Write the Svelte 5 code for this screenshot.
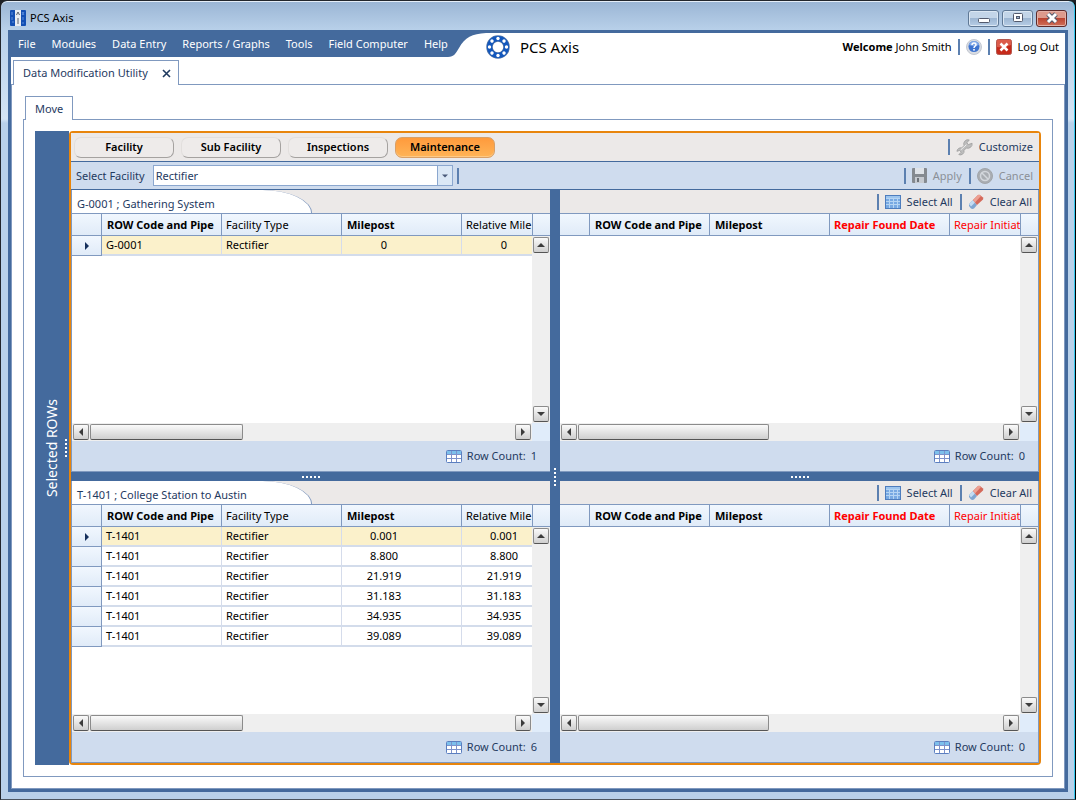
<!-- Data modification utility: move records between facilities -->
<script lang="ts">
  interface Row {
    code: string;
    type: string;
    milepost: string;
    relative: string;
  }

  interface Pane {
    id: string;
    title: string;
    rows: Row[];
  }

  const menu = ['File', 'Modules', 'Data Entry', 'Reports / Graphs', 'Tools', 'Field Computer', 'Help'];
  const sections = ['Facility', 'Sub Facility', 'Inspections', 'Maintenance'];
  const facilities = ['Rectifier', 'Test Point', 'Bond'];

  const columns = ['ROW Code and Pipe', 'Facility Type', 'Milepost', 'Relative Mile'];
  const repairColumns = ['ROW Code and Pipe', 'Milepost', 'Repair Found Date', 'Repair Initiat'];

  const toRow = (code: string, milepost: string): Row => ({
    code,
    type: 'Rectifier',
    milepost,
    relative: milepost
  });

  const panes: Pane[] = [
    { id: 'g', title: 'G-0001 ; Gathering System', rows: [toRow('G-0001', '0')] },
    {
      id: 't',
      title: 'T-1401 ; College Station to Austin',
      rows: ['0.001', '8.800', '21.919', '31.183', '34.935', '39.089'].map((m) => toRow('T-1401', m))
    }
  ];

  let section = $state('Maintenance');
  let facility = $state('Rectifier');
  let selected = $state<Record<string, number>>({ g: 0, t: 0 });
</script>

{#snippet arrow(direction: string)}
  <svg class="arrow {direction}" viewBox="0 0 8 8" aria-hidden="true"><path d="M0 6 L4 2 L8 6Z" /></svg>
{/snippet}

{#snippet dots(vertical: boolean)}
  <span class="dots" class:vertical aria-hidden="true"><i></i><i></i><i></i><i></i><i></i></span>
{/snippet}

{#snippet vertical()}
  <div class="v-side">
    <div class="cap"></div>
    <div class="v-scroll">
      <button type="button" class="scroll-button" aria-label="Scroll up">{@render arrow('up')}</button>
      <button type="button" class="scroll-button" aria-label="Scroll down">{@render arrow('down')}</button>
    </div>
  </div>
{/snippet}

{#snippet horizontal(size: number)}
  <div class="h-scroll">
    <button type="button" class="scroll-button" aria-label="Scroll left">{@render arrow('left')}</button>
    <div class="track"><div class="thumb" style="width: {size}%"></div></div>
    <button type="button" class="scroll-button" aria-label="Scroll right">{@render arrow('right')}</button>
  </div>
  <div class="corner"></div>
{/snippet}

{#snippet rowCount(count: number)}
  <footer class="count">
    <svg width="16" height="13" viewBox="0 0 16 13" aria-hidden="true">
      <rect x="0.5" y="0.5" width="15" height="12" rx="1" fill="#fff" stroke="#5b7fc0" />
      <rect x="1" y="1" width="14" height="3" fill="#7cc0ec" />
      <path d="M1 4.5h14M1 8.5h14M5.5 1v11M10.5 1v11" stroke="#7d92cb" fill="none" />
    </svg>
    <span>Row Count:</span>
    <span>{count}</span>
  </footer>
{/snippet}

{#snippet sourcePane(pane: Pane)}
  <section class="pane">
    <header class="pane-header"><h2>{pane.title}</h2></header>
    <div class="grid">
      <div class="table-clip">
        <table>
          <thead>
            <tr>
              <th class="marker"></th>
              {#each columns as column, i}
                <th class:strong={i % 2 === 0}>{column}</th>
              {/each}
            </tr>
          </thead>
          <tbody>
            {#each pane.rows as row, i}
              <tr class:current={selected[pane.id] === i} onclick={() => (selected[pane.id] = i)}>
                <td class="marker">
                  {#if selected[pane.id] === i}{@render arrow('right')}{/if}
                </td>
                <td>{row.code}</td>
                <td>{row.type}</td>
                <td class="number">{row.milepost}</td>
                <td class="number">{row.relative}</td>
              </tr>
            {/each}
          </tbody>
        </table>
      </div>
      {@render vertical()}
      {@render horizontal(36)}
    </div>
    {@render rowCount(pane.rows.length)}
  </section>
{/snippet}

{#snippet targetPane()}
  <section class="pane target">
    <header class="pane-header">
      <div class="tools">
        <button type="button" class="tool">
          <svg width="16" height="14" viewBox="0 0 16 14" aria-hidden="true">
            <rect x="0.5" y="0.5" width="15" height="13" fill="#78a9e2" stroke="#4e7dbd" />
            <path d="M1 3.5h14M1 6.5h14M1 9.5h14M4.5 1v12M8.5 1v12M12.5 1v12" stroke="#b5d4f3" fill="none" />
            <path d="M1 1h14v2H1z" fill="#9dc5ee" />
          </svg>
          Select All
        </button>
        <button type="button" class="tool">
          <svg width="16" height="16" viewBox="0 0 16 16" aria-hidden="true">
            <path d="M1 10 L5 6 L9 11 L6 14.5 Q4 15.5 2.5 14 L1 12Z" fill="#7fa6d2" />
            <path d="M1 10 L5 6 L7 8.5 L3 12.5Z" fill="#c3dcf3" />
            <path d="M5 6 L10 1 Q11 0.5 12 1 L15 3.5 Q15.5 5 15 5.5 L9 11Z" fill="#d5695a" />
            <path d="M5 6 L10 1 Q11 0.5 12 1 L13 2 L7 8.5Z" fill="#eda092" />
          </svg>
          Clear All
        </button>
      </div>
    </header>
    <div class="grid">
      <div class="table-clip">
        <table>
          <thead>
            <tr>
              <th class="marker"></th>
              {#each repairColumns as column, i}
                <th class:strong={i < 3} class:required={i > 1}>{column}</th>
              {/each}
            </tr>
          </thead>
        </table>
      </div>
      {@render vertical()}
      {@render horizontal(45)}
    </div>
    {@render rowCount(0)}
  </section>
{/snippet}

<div class="window">
  <header class="title-bar">
    <svg width="16" height="16" viewBox="0 0 16 16" aria-hidden="true">
      <rect width="16" height="16" rx="1" fill="#1450b4" />
      <rect x="5" width="6" height="16" fill="#e9edf3" />
      <path d="M2 2v3M2 7v3M2 12h2M12 2l2 3M14 2l-2 3M13 7v3M12 13h2" stroke="#5c8fe0" />
      <path d="M6.5 5 8 2l1.5 3M8 8v6" stroke="#59616e" fill="none" />
    </svg>
    <h1>PCS Axis</h1>
    <div class="window-buttons">
      <button type="button" aria-label="Minimize">
        <svg width="12" height="12" viewBox="0 0 12 12"><rect x="0.5" y="6.5" width="11" height="4" rx="1" fill="#fff" stroke="#535a6d" /></svg>
      </button>
      <button type="button" aria-label="Maximize">
        <svg width="12" height="12" viewBox="0 0 12 12">
          <rect x="1.5" y="1.5" width="9" height="8" rx="1" fill="#fff" stroke="#535a6d" />
          <rect x="4.5" y="4.5" width="3" height="2" fill="#9db4d1" stroke="#535a6d" />
        </svg>
      </button>
      <button type="button" class="close" aria-label="Close">
        <svg width="12" height="12" viewBox="0 0 12 12" fill="none">
          <path d="M2 2l8 8M10 2l-8 8" stroke="#535a6d" stroke-width="5" />
          <path d="M2 2l8 8M10 2l-8 8" stroke="#fff" stroke-width="3" />
        </svg>
      </button>
    </div>
  </header>

  <div class="client">
    <div class="menu-bar">
      <nav>
        {#each menu as item}
          <button type="button">{item}</button>
        {/each}
      </nav>
      <svg class="swoosh" width="38" height="24" viewBox="0 0 38 24" aria-hidden="true">
        <path d="M0 0H38C24 1 17 4 11 15C8 20 6 24 0 24Z" />
      </svg>
      <div class="brand">
        <svg width="24" height="24" viewBox="0 0 24 24" aria-hidden="true">
          <circle cx="12" cy="12" r="8.5" fill="none" stroke="#5274a6" stroke-width="6.5" />
          <circle cx="12" cy="12" r="8.5" fill="none" stroke="#1257bd" stroke-width="5" />
          {#each [0, 45, 90, 135, 180, 225, 270, 315] as angle}
            <circle cx="12" cy="3.5" r="1.7" fill="#fff" transform="rotate({angle} 12 12)" />
          {/each}
        </svg>
        <span>PCS Axis</span>
      </div>
      <div class="user">
        <span><b>Welcome</b> John Smith</span>
        <button type="button" class="tool" aria-label="Help">
          <svg width="16" height="16" viewBox="0 0 16 16">
            <circle cx="8" cy="8" r="7.5" fill="#d9dce2" stroke="#c3c8d2" />
            <circle cx="8" cy="7.5" r="5.5" fill="#3f74cf" />
            <path d="M3 6a5 4 0 0 1 10 0q-5 2-10 0" fill="#82a9e8" />
            <path d="M6 6q0-2 2-2t2 1.7q0 1-1.2 1.6Q8 7.8 8 9" stroke="#fff" stroke-width="1.5" fill="none" />
            <rect x="7.2" y="10" width="1.6" height="1.6" fill="#fff" />
          </svg>
        </button>
        <button type="button" class="tool">
          <svg width="16" height="16" viewBox="0 0 16 16" aria-hidden="true">
            <rect x="0.5" y="0.5" width="15" height="15" rx="2" fill="#c62a1b" stroke="#b5584e" />
            <path d="M1 2q0-1 1-1h12q1 0 1 1v4q-7 3-14 2z" fill="#dc5c4b" />
            <path d="M4.5 4.5l7 7M11.5 4.5l-7 7" stroke="#fff" stroke-width="2.5" />
          </svg>
          Log Out
        </button>
      </div>
    </div>

    <div class="tabs documents">
      <div class="tab">
        <span>Data Modification Utility</span>
        <button type="button" aria-label="Close tab">
          <svg width="9" height="9" viewBox="0 0 9 9"><path d="M1 1l7 7M8 1l-7 7" stroke="#1f3a5f" stroke-width="1.6" /></svg>
        </button>
      </div>
    </div>

    <main class="page">
      <div class="tabs inner">
        <div class="tab">Move</div>
      </div>
      <div class="tab-body">
        <button type="button" class="side-bar">
          <span>Selected ROWs</span>
          {@render dots(true)}
        </button>

        <div class="panel">
          <div class="sections">
            {#each sections as name}
              <button type="button" class="section" class:active={section === name} onclick={() => (section = name)}>
                {name}
              </button>
            {/each}
            <div class="tools">
              <button type="button" class="tool">
                <svg width="17" height="17" viewBox="0 0 18 18" aria-hidden="true">
                  <path d="M17 4.5a4.5 4.5 0 0 1-6 5L8.5 12a4 4 0 0 1-5.5 4.5L5.5 14 4 12 1 13a4 4 0 0 1 5-3.5L8.5 7A4.5 4.5 0 0 1 14 1L11.5 4 13 6z" fill="#bdbdbd" stroke="#a3a3a3" />
                  <path d="M5 11.5L11 6" stroke="#f2f2f2" />
                </svg>
                Customize
              </button>
            </div>
          </div>

          <div class="filter">
            <label for="facility">Select Facility</label>
            <div class="combo">
              <select id="facility" bind:value={facility}>
                {#each facilities as name}
                  <option>{name}</option>
                {/each}
              </select>
              <span class="combo-button">{@render arrow('down')}</span>
            </div>
            <i class="rule"></i>
            <div class="tools">
              <button type="button" class="tool" disabled>
                <svg width="15" height="15" viewBox="0 0 15 15" aria-hidden="true">
                  <path d="M0 1q0-1 1-1h13q1 0 1 1v13q0 1-1 1H1q-1 0-1-1z" fill="#858a90" />
                  <path d="M3 0h9v6H3z" fill="#dfe3e8" />
                  <path d="M3 9h9v6H3z" fill="#c6cad0" />
                  <path d="M5 10h2v4H5z" fill="#6d7278" />
                </svg>
                Apply
              </button>
              <button type="button" class="tool" disabled>
                <svg width="16" height="16" viewBox="0 0 16 16" aria-hidden="true">
                  <circle cx="8" cy="8" r="7.5" fill="#a9adb2" stroke="#a1a5aa" />
                  <circle cx="8" cy="8" r="4.5" fill="none" stroke="#d3d7dc" stroke-width="1.5" />
                  <path d="M5 5l6 6" stroke="#d3d7dc" stroke-width="1.5" />
                </svg>
                Cancel
              </button>
            </div>
          </div>

          <div class="work">
            <div class="stack">
              {@render sourcePane(panes[0])}
              <div class="splitter">{@render dots(false)}</div>
              {@render sourcePane(panes[1])}
            </div>
            <div class="splitter">{@render dots(true)}</div>
            <div class="stack">
              {@render targetPane()}
              <div class="splitter">{@render dots(false)}</div>
              {@render targetPane()}
            </div>
          </div>
        </div>
      </div>
    </main>
  </div>
</div>

<style>
  :global(body) {
    --blue: #446a9d;
    --line: #8099bf;
    --navy: #1f3a5f;
    --bar: #cfdcee;
    --grey: #ece9e8;
    background: #1c2025;
    font: 11px/16px 'Noto Sans', 'Open Sans', sans-serif;
    color: #000;
  }

  * {
    box-sizing: border-box;
  }

  button,
  select {
    font: inherit;
    color: inherit;
    border: none;
    margin: 0;
    padding: 0;
    background: none;
  }

  svg {
    display: block;
    flex: none;
  }

  h1,
  h2 {
    margin: 0;
    font: inherit;
  }

  /* Window frame */
  .window {
    display: flex;
    flex-direction: column;
    height: 100vh;
    min-height: 480px;
    padding: 1px 7px 7px 7px;
    border: 1px solid #22262c;
    border-right-color: #000;
    border-bottom-color: #4b5560;
    border-radius: 7px 7px 0 0;
    background: linear-gradient(#9ab5d4, #b9d1ea 30px, #d4e4f4 118px, #b9d1ea 122px);
    box-shadow: inset -1px 0 #35c8ee, inset 0 1px #e5eef8;
  }

  .title-bar {
    display: flex;
    align-items: center;
    gap: 4px;
    height: 28px;
    padding: 4px 1px 0 2px;
  }

  .window-buttons {
    display: flex;
    gap: 3px;
    margin-left: auto;
  }

  .window-buttons button {
    display: grid;
    place-items: center;
    width: 31px;
    height: 17px;
    border: 1px solid #5f7895;
    border-radius: 3px;
    background: linear-gradient(#c3d5e8 50%, #9db6d2 50%, #b6cde6);
    box-shadow: inset 0 0 0 1px #dbe7f3;
  }

  .window-buttons .close {
    border-color: #5e2a2a;
    background: linear-gradient(#dd9a8c 50%, #bb4430 50%, #d0705a);
    box-shadow: inset 0 0 0 1px #e4b1a7;
  }

  .client {
    flex: 1;
    display: flex;
    flex-direction: column;
    min-height: 0;
    border: 3px solid var(--blue);
    background: #fff;
  }

  /* Menu bar */
  .menu-bar {
    display: flex;
    height: 24px;
  }

  nav {
    display: flex;
    gap: 16px;
    padding: 0 0 2px 7px;
    background: var(--blue);
    color: #fff;
  }

  .swoosh {
    fill: var(--blue);
  }

  .brand {
    display: flex;
    align-items: center;
    gap: 10px;
    height: 28px;
    padding-bottom: 1px;
    font-size: 15px;
    line-height: 20px;
  }

  .user {
    display: flex;
    align-items: center;
    height: 28px;
    margin-left: auto;
    padding-right: 6px;
  }

  .user .tool {
    margin-left: 6px;
    color: #000;
  }

  /* Tabs */
  .tabs {
    display: flex;
    color: var(--navy);
  }

  .tab {
    display: flex;
    align-items: center;
    gap: 14px;
    border: 1px solid var(--line);
    border-bottom: none;
    padding: 0 9px;
    background: #fff;
    margin-bottom: -1px;
    z-index: 1;
  }

  .documents {
    padding: 3px 2px 0;
  }

  .documents .tab {
    height: 25px;
    padding-right: 7px;
  }

  .inner {
    padding: 0 2px;
  }

  .inner .tab {
    height: 24px;
  }

  .page {
    flex: 1;
    display: flex;
    flex-direction: column;
    min-height: 0;
    padding: 11px;
    border: 1px solid var(--line);
  }

  .tab-body {
    flex: 1;
    display: flex;
    min-height: 0;
    padding: 11px;
    border: 1px solid var(--line);
  }

  .side-bar {
    display: flex;
    align-items: center;
    justify-content: flex-end;
    gap: 4px;
    width: 34px;
    padding-right: 2px;
    background: var(--blue);
    color: #fff;
    font-size: 14px;
    line-height: 18px;
  }

  .side-bar > span:first-child {
    writing-mode: vertical-rl;
    transform: rotate(180deg);
  }

  .dots {
    display: flex;
    gap: 2px;
  }

  .dots.vertical {
    flex-direction: column;
  }

  .dots i {
    width: 2px;
    height: 2px;
    background: #fff;
  }

  /* Panel */
  .panel {
    flex: 1;
    display: flex;
    flex-direction: column;
    min-width: 0;
    border: 2px solid #e8850c;
    border-radius: 4px;
  }

  .sections {
    display: flex;
    align-items: center;
    gap: 7px;
    height: 29px;
    padding: 0 6px 0 3px;
    border-bottom: 1px solid var(--blue);
    background: var(--grey);
  }

  .section {
    width: 100px;
    height: 21px;
    border: 1px solid #e2dfdd;
    border-right-color: #a5a2a0;
    border-bottom-color: #a5a2a0;
    border-radius: 7px;
    background: #eeebea;
    font-weight: 600;
  }

  .section.active {
    border-color: #d9a067;
    background: linear-gradient(#ff9a3c, #ffb457);
    box-shadow: inset 0 -1px #ffc983;
  }

  .tools {
    display: flex;
    gap: 7px;
    margin-left: auto;
  }

  .tool {
    display: flex;
    align-items: center;
    gap: 6px;
    height: 16px;
    padding-left: 6px;
    border-left: 2px solid #5c80b0;
    color: var(--navy);
  }

  .tool:disabled {
    color: #8b9097;
  }

  .filter {
    display: flex;
    align-items: center;
    gap: 4px;
    height: 28px;
    padding: 0 6px 0 5px;
    border-bottom: 1px solid var(--blue);
    background: var(--bar);
    color: var(--navy);
  }

  .filter label {
    padding-right: 4px;
  }

  .combo {
    position: relative;
    width: 300px;
    height: 21px;
  }

  select {
    appearance: none;
    width: 100%;
    height: 100%;
    border: 1px solid #8ba7cf;
    padding: 0 20px 0 2px;
    background: #fff;
  }

  .combo-button {
    position: absolute;
    top: 1px;
    right: 1px;
    bottom: 1px;
    display: grid;
    place-items: center;
    width: 15px;
    border-left: 1px solid #8ba7cf;
    background: #dbe8f6;
    pointer-events: none;
  }

  .combo-button .arrow {
    width: 6px;
    height: 6px;
    fill: #4a5a7a;
  }

  .rule {
    width: 2px;
    height: 16px;
    background: #5c80b0;
  }

  .work {
    flex: 1;
    display: grid;
    grid-template-columns: minmax(0, 1fr) 10px minmax(0, 1fr);
    min-height: 0;
  }

  .splitter {
    display: grid;
    place-items: center;
    background: var(--blue);
  }

  .stack {
    display: grid;
    grid-template-rows: minmax(0, 1fr) 9px minmax(0, 1fr);
    min-height: 0;
  }

  /* Panes */
  .pane {
    display: flex;
    flex-direction: column;
    min-height: 0;
    border-left: 1px solid var(--line);
  }

  .pane.target {
    border-left: none;
    border-right: 1px solid var(--line);
  }

  .pane-header {
    display: flex;
    align-items: center;
    height: 24px;
    border-bottom: 1px solid var(--line);
    background: var(--grey);
    color: var(--navy);
  }

  .pane-header h2 {
    min-width: 240px;
    height: 23px;
    padding: 6px 40px 0 5px;
    border-right: 1px solid var(--line);
    border-radius: 0 50px 0 0 / 0 23px 0 0;
    background: #fff;
  }

  .pane-header .tools {
    padding-right: 6px;
  }

  .grid {
    flex: 1;
    display: grid;
    grid-template: minmax(0, 1fr) 18px / minmax(0, 1fr) 18px;
    min-height: 0;
    background: #fff;
  }

  .table-clip {
    overflow: hidden;
  }

  table {
    width: 510px;
    table-layout: fixed;
    border-collapse: separate;
    border-spacing: 0;
  }

  th,
  td {
    width: 120px;
    padding: 0 4px;
    white-space: nowrap;
    text-align: left;
    font-weight: 400;
  }

  th {
    height: 22px;
    border-right: 1px solid var(--line);
    border-bottom: 1px solid var(--line);
  }

  th,
  .cap {
    background: linear-gradient(#f1f7fe, #e0ebf8);
  }

  th.strong {
    padding-left: 5px;
    font-weight: 700;
  }

  th.required {
    padding-left: 4px;
    color: #f00;
  }

  td {
    height: 20px;
    border-right: 1px solid #d5dceb;
    border-bottom: 2px solid #d3dceb;
  }

  .current td {
    background: #fbf1cb;
  }

  td.number {
    padding-right: 39px;
    text-align: center;
  }

  .marker {
    width: 30px;
  }

  td.marker,
  .current td.marker {
    border-right: 1px solid var(--line);
    border-bottom: 1px solid var(--line);
    background: linear-gradient(#f1f7fe, #e0ebf8);
  }

  .marker .arrow {
    margin: auto;
    fill: #16305c;
  }

  .cap {
    height: 22px;
    border-left: 1px solid var(--line);
    border-bottom: 1px solid var(--line);
  }

  .v-side {
    display: flex;
    flex-direction: column;
  }

  .v-scroll {
    flex: 1;
    display: flex;
    flex-direction: column;
    justify-content: space-between;
    padding: 1px;
    background: #efefef;
  }

  .h-scroll {
    display: flex;
    padding: 1px;
    background: #efefef;
  }

  .corner {
    background: #e0ecfa;
  }

  .scroll-button,
  .thumb {
    height: 16px;
    border: 1px solid #8b8b8b;
    border-bottom-color: #555;
    border-radius: 2px;
    background: linear-gradient(#fafafa, #cfcfcf);
  }

  .scroll-button {
    display: grid;
    place-items: center;
    width: 16px;
  }

  .track {
    flex: 1;
    padding: 0 1px;
  }

  .arrow {
    width: 8px;
    height: 8px;
    fill: #3c3c3c;
  }

  .down {
    transform: rotate(180deg);
  }

  .left {
    transform: rotate(-90deg);
  }

  .right {
    transform: rotate(90deg);
  }

  .count {
    display: flex;
    align-items: center;
    justify-content: flex-end;
    gap: 5px;
    height: 31px;
    padding-right: 13px;
    border-bottom: 1px solid var(--line);
    background: var(--bar);
    color: var(--navy);
  }
</style>
